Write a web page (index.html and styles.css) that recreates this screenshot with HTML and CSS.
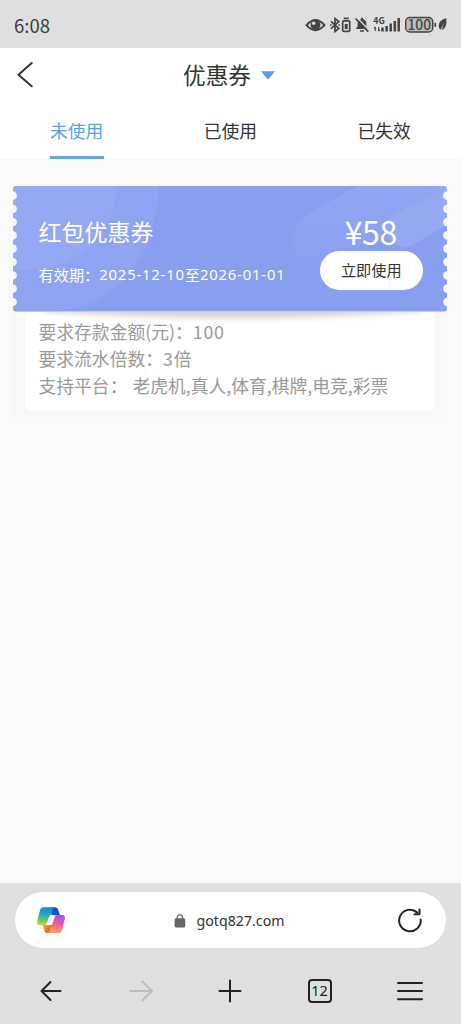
FILE: index.html
```html
<!DOCTYPE html>
<html lang="zh-CN">
<head>
<meta charset="utf-8">
<meta name="viewport" content="width=device-width, initial-scale=1">
<title>优惠券</title>
<link rel="stylesheet" href="styles.css">
</head>
<body>
<div class="screen">
  <div class="status">
    <span class="clock">6:08</span>
    <svg class="status-icons" width="144" height="20" viewBox="304 15 144 20" fill="none" stroke="#444" stroke-width="1.5">
      <path d="M306.500 25.200Q315.500 14.800 324.500 25.200Q315.500 35.200 306.500 25.200Z" stroke-width="2"/>
      <circle cx="315.500" cy="25" r="4.900" fill="#444" stroke="none"/>
      <circle cx="313.700" cy="23.300" r="1.700" fill="#ddd" stroke="none"/>
      <path d="M331 21.300L338.800 28.500L335 31.500V18.500L338.800 21.500L331 28.700" stroke-width="1.700"/>
      <path d="M330 25h1.500M338.500 25h1.500"/>
      <rect x="342.700" y="20.800" width="7" height="10.600" rx="1.200" stroke-width="1.700"/>
      <path d="M343.700 18.400h5" stroke-width="1.700"/>
      <path d="M344.700 24h3v5h-3z" fill="#444" stroke="none"/>
      <path d="M355.700 28.900L357.600 26.500V23Q358 19.500 362 19Q366 19.500 366.400 23V26.500L368.300 28.900Z" fill="#444" stroke="none"/>
      <path d="M360 30.900h4M361 18.500h2"/>
      <path d="M356.700 17.500L369.500 30.500" stroke="#dfdfdf" stroke-width="1.500"/>
      <path d="M355.500 18.500L368.300 31.700" stroke-width="1.700"/>
      <text class="net" x="373.300" y="24.300">4G</text>
      <path d="M375.300 31v-4M378.600 27v4M374 28.300l1.300-1.500M378.600 31.200l1.300-1.500" stroke-width="1.100"/>
      <path d="M382.500 31.500v-4M386.600 31.500v-5.500M390.700 31.500v-8M394.800 31.500v-10.500M398.700 31.500v-13.500" stroke-width="2.500"/>
      <rect x="405.700" y="17.500" width="27" height="14.500" rx="4" fill="#bbb" stroke-width="1.400"/>
      <text class="battery" x="407.500" y="29.700">100</text>
      <path d="M435.200 22.800v4" stroke-width="1.700"/>
      <path d="M446.300 18.300Q439 20 438.700 25.500Q438.700 28 440.300 29.800L444.600 22.500L441.500 30Q447.500 28.500 446.300 18.300Z" fill="#444" stroke="none"/>
    </svg>
  </div>

  <header class="header">
    <svg class="back" width="18" height="27" viewBox="0 0 18 27"><path d="M14.700 1L1.500 12.700L14.700 24.300"/></svg>
    <h1 class="title">优惠券</h1>
    <svg class="caret" width="14" height="9" viewBox="0 0 14 9"><path d="M0 .3H14L7 8.700Z"/></svg>
  </header>

  <nav class="tabs">
    <span class="tab active">未使用</span>
    <span class="tab">已使用</span>
    <span class="tab">已失效</span>
  </nav>

  <main class="content">
    <article class="coupon">
      <section class="ticket">
        <svg class="ticket-bg" width="435" height="126" viewBox="0 0 435 126">
          <defs>
            <mask id="edge">
              <rect width="434" height="125.500" rx="3" fill="#fff"/>
              <g fill="#000">
                <circle cx="-.5" cy="9.700" r="4.400"/><circle cx="-.5" cy="22.900" r="4.400"/><circle cx="-.5" cy="36.200" r="4.400"/>
                <circle cx="-.5" cy="49.400" r="4.400"/><circle cx="-.5" cy="62.700" r="4.400"/><circle cx="-.5" cy="76" r="4.400"/>
                <circle cx="-.5" cy="89.300" r="4.400"/><circle cx="-.5" cy="102.700" r="4.400"/><circle cx="-.5" cy="116" r="4.400"/>
                <circle cx="434.500" cy="9.700" r="4.400"/><circle cx="434.500" cy="22.900" r="4.400"/><circle cx="434.500" cy="36.200" r="4.400"/>
                <circle cx="434.500" cy="49.400" r="4.400"/><circle cx="434.500" cy="62.700" r="4.400"/><circle cx="434.500" cy="76" r="4.400"/>
                <circle cx="434.500" cy="89.300" r="4.400"/><circle cx="434.500" cy="102.700" r="4.400"/><circle cx="434.500" cy="116" r="4.400"/>
              </g>
            </mask>
            <linearGradient id="band" x1="0" y1="0" x2="0" y2="1">
              <stop offset="0" stop-color="#90a6f2"/><stop offset="1" stop-color="#8aa0f0"/>
            </linearGradient>
          </defs>
          <g mask="url(#edge)">
            <rect width="435" height="126" fill="#889eef"/>
            <path d="M0 0H145.500C148 50 114 125 40 124.500H0Z" fill="#8fa4f1"/>
            <path d="M0 0H103.500C103 45 65 84 17 84H0Z" fill="#94a8f3"/>
            <path d="M345 0L298 26C268 43 278 80 304 77C320 76 330 67 345 60L435 38V0Z" fill="url(#band)"/>
            <path d="M435 0L377 31C365 40 378 69 400 59L435 38Z" fill="#94a9f2"/>
          </g>
        </svg>
        <div class="ticket-info">
          <h2 class="name">红包优惠券</h2>
          <p class="validity"><span>有效期：</span><span class="date">2025-12-10</span><span>至</span><span class="date">2026-01-01</span></p>
        </div>
        <div class="ticket-side">
          <div class="amount">¥58</div>
          <button class="use">立即使用</button>
        </div>
      </section>
      <section class="details">
        <svg class="shade" width="410" height="16" viewBox="0 0 410 16">
          <defs><filter id="soft" x="-10%" y="-100%" width="120%" height="300%"><feGaussianBlur stdDeviation="3"/></filter></defs>
          <path d="M20 -8H396V-1Q300 6 215 6Q90 5 20 -1Z" fill="#000" opacity=".18" filter="url(#soft)"/>
        </svg>
        <p>要求存款金额(元)：<span class="num">100</span></p>
        <p>要求流水倍数：<span class="num">3</span>倍</p>
        <p>支持平台：<span class="platforms">老虎机,真人,体育,棋牌,电竞,彩票</span></p>
      </section>
    </article>
  </main>

  <footer class="browser">
    <div class="address">
      <svg class="logo" width="30" height="28" viewBox="0 0 30 28">
        <defs>
          <linearGradient id="cool" x1=".5" y1="0" x2=".35" y2="1"><stop offset="0" stop-color="#168bd9"/><stop offset=".4" stop-color="#23a5cf"/><stop offset=".7" stop-color="#5fc376"/><stop offset="1" stop-color="#d9ce33"/></linearGradient>
          <linearGradient id="warm" x1=".7" y1="0" x2=".5" y2="1"><stop offset="0" stop-color="#a64ee5"/><stop offset=".5" stop-color="#ed5d9c"/><stop offset="1" stop-color="#ff9b5b"/></linearGradient>
          <linearGradient id="orange" x1="0" y1="0" x2="1" y2=".6"><stop offset="0" stop-color="#ffb226"/><stop offset="1" stop-color="#e0462b"/></linearGradient>
        </defs>
        <path d="M15 1.200h4.200c1.600 0 2.300.9 2.900 2.500L24 9.300h-6.500L14 8z" fill="#1d49cb"/>
        <path d="M15 26.900h-4c-1.500 0-2.200-1-2.700-2.500L6.800 19h8.400l2 2z" fill="url(#orange)"/>
        <path d="M7.500 1.200H19c-1.500.4-2 1.700-2.600 3.400l-1.600 4.700c-1.500.6-2 1.700-2.500 3.200l-1.200 4c-.6 1.900-1.600 2.700-3.400 2.700H4c-2.600 0-3.400-2-2.700-4.500L4 4.200C4.600 2.200 5.500 1.200 7.500 1.200z" fill="url(#cool)"/>
        <path d="M22.600 26.900H11.200c1.500-.4 2-1.700 2.600-3.400l1.300-4.200c1-.7 1.500-1.800 2-3.300l1.200-4c.6-1.900 1.600-3 3.400-3H26c2.600 0 3.400 2 2.700 4.500L26 23.900c-.6 2-1.500 3-3.400 3z" fill="url(#warm)"/>
      </svg>
      <div class="site">
        <svg width="12" height="14" viewBox="0 0 12 14"><rect x=".6" y="4.300" width="10.600" height="9.200" rx="1.600" fill="#666"/><path d="M3.200 5V3.500a2.700 2.700 0 015.400 0V5" fill="none" stroke="#666" stroke-width="1.300"/></svg>
        <span class="url">gotq827.com</span>
      </div>
      <svg class="reload" width="26" height="26" viewBox="0 0 26 26"><path d="M23.700 12.500A10.800 10.800 0 1 1 20.300 5.600"/><path d="M17.500 7.200H22.500V2.500"/></svg>
    </div>
    <div class="toolbar">
      <svg width="24" height="24" viewBox="0 0 24 24"><path d="M21.500 12H3M11.500 3L2.500 12L11.500 21"/></svg>
      <svg class="disabled" width="24" height="24" viewBox="0 0 24 24"><path d="M1.500 12H23M13.300 2.500L23 12L13.300 21.500"/></svg>
      <svg width="24" height="24" viewBox="0 0 24 24"><path d="M1.500 12H22.500M12 1.500V22.500"/></svg>
      <span class="count">12</span>
      <svg class="menu" width="28" height="24" viewBox="0 0 28 24"><path d="M1 4H25M1 12H25M1 20.300H25"/></svg>
    </div>
  </footer>
</div>
</body>
</html>
```
FILE: styles.css
```css
* { box-sizing: border-box; margin: 0; padding: 0; }
body { font-family: "Noto Sans CJK SC", sans-serif; color: #333; }
svg { display: block; flex: none; }
.screen { width: 461px; height: 1024px; display: flex; flex-direction: column; background: #f9f9f9; overflow: hidden; }

.status { height: 48px; flex: none; background: #dfdfdf; display: flex; justify-content: space-between; align-items: center; padding: 2px 13px 0 14px; }
.clock { font: 400 18.500px/24px "Noto Sans CJK SC", sans-serif; color: #3c3c3c; }
.net { font: 700 8.800px "Noto Sans CJK SC", sans-serif; fill: #444; stroke: none; }
.battery { font: 500 13.800px "Noto Sans CJK SC", sans-serif; fill: #444; stroke: none; }

.header { height: 55px; flex: none; background: #fff; display: grid; grid-template-columns: 166px auto 14px 1fr; align-items: center; padding-left: 17px; }
.back path { fill: none; stroke: #333; stroke-width: 2; stroke-linecap: round; stroke-linejoin: round; }
.title { font-size: 22.700px; line-height: 34px; font-weight: 400; width: 78px; padding-bottom: 2px; }
.caret path { fill: #559fee; }

.tabs { height: 56px; flex: none; background: #fff; display: flex; justify-content: space-between; padding: 0 50px; }
.tab { font-size: 17.800px; line-height: 26px; padding-top: 14px; height: 56px; width: 53.500px; white-space: nowrap; }
.tab.active { color: #58a3e9; border-bottom: 3px solid #62a5e5; }

.content { flex: 1; padding: 27px 13px 0; }
.coupon { background: #f7f7f7; padding-bottom: 7px; }
.ticket { position: relative; width: 435px; height: 126px; color: #fff; display: flex; justify-content: space-between; padding: 0 25.500px; z-index: 1; }
.ticket-bg { position: absolute; left: 0; top: 0; }
.ticket-info, .ticket-side { position: relative; }
.ticket-info { padding-top: 28px; }
.name { font-size: 23px; line-height: 34px; font-weight: 400; }
.validity { display: flex; margin-top: 14px; font-size: 15.200px; line-height: 24px; white-space: nowrap; }
.date { font-family: "Noto Sans", sans-serif; letter-spacing: .78px; font-size: 14.900px; }
.ticket-side { padding-top: 26px; width: 102.500px; display: flex; flex-direction: column; align-items: center; }
.amount { font: 400 32px/39px "Noto Sans CJK SC", sans-serif; letter-spacing: -.4px; margin-right: 1px; }
.use { width: 102.500px; height: 38.500px; flex: none; border: 0; border-radius: 20px; background: #fff; color: #333; font: 400 15.200px/34px "Noto Sans CJK SC", sans-serif; padding-bottom: 3px; }

.details { position: relative; margin-left: 12px; width: 410px; height: 99px; background: #fff; border-radius: 0 0 6px 6px; padding: 6px 14px 0 13.500px; color: #999; font-size: 17.800px; line-height: 27px; white-space: nowrap; }
.details p { position: relative; }
.shade { position: absolute; left: 0; top: 0; }
.num { letter-spacing: .8px; }
.platforms { margin-left: 5px; }

.browser { height: 141px; flex: none; background: #dfdfdf; padding: 9px 15px 0; }
.address { height: 56px; border-radius: 28px; background: #fff; display: flex; align-items: center; justify-content: space-between; padding: 0 23px 0 21px; }
.site { display: flex; align-items: center; gap: 11px; padding-right: 5px; padding-top: 1px; }
.url { font: 400 14.200px/22px "Noto Sans", sans-serif; color: #333; }
.reload path { fill: none; stroke: #222; stroke-width: 2; stroke-linecap: round; stroke-linejoin: round; }
.toolbar { display: flex; justify-content: space-between; align-items: center; height: 85px; padding: 0 21px 0 24px; }
.toolbar path { fill: none; stroke: #222; stroke-width: 2; stroke-linecap: round; stroke-linejoin: round; }
.toolbar .disabled path { stroke: #bdbdbd; }
.count { width: 24px; height: 24px; border: 2px solid #222; border-radius: 4px; font: 400 14.500px/19px "Noto Sans", sans-serif; text-align: center; color: #222; }
```
